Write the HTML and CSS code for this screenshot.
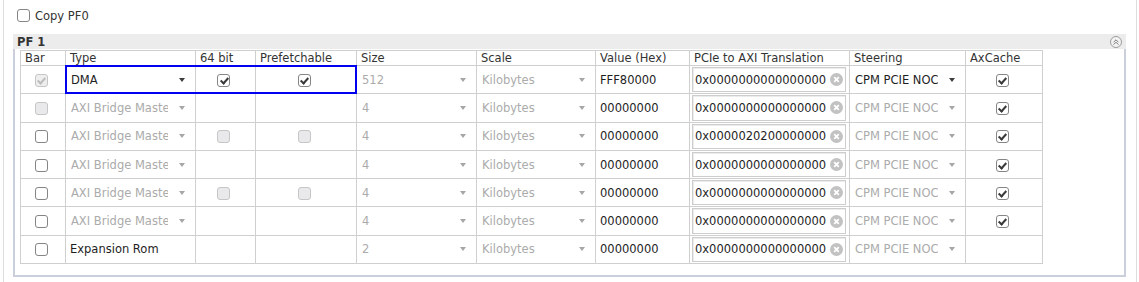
FILE: index.html
```html
<!DOCTYPE html>
<html lang="en">
<head>
  <meta charset="UTF-8" />
  <title>PF 1 BAR settings</title>
  <link rel="stylesheet" href="styles.css">
</head>
<body>
  <div class="frame">
    <label class="copy"><span class="cb"></span>Copy PF0</label>

    <section class="pf">
      <div class="pf-head">
        <span>PF 1</span>
        <svg class="collapse" viewBox="0 0 12 12" width="12" height="12">
          <circle cx="6" cy="6" r="5.5" fill="#f3f3f3" stroke="#9c9c9c" />
          <path d="M3.6 6.2 6 3.8 8.4 6.2M3.6 8.6 6 6.2 8.4 8.6" fill="none" stroke="#7a7a7a" stroke-width="1" />
        </svg>
      </div>

      <div class="pf-body">
        <div class="bars">
          <div class="row head">
            <div class="th">Bar</div>
            <div class="th">Type</div>
            <div class="th">64 bit</div>
            <div class="th">Prefetchable</div>
            <div class="th">Size</div>
            <div class="th">Scale</div>
            <div class="th">Value (Hex)</div>
            <div class="th">PCIe to AXI Translation</div>
            <div class="th">Steering</div>
            <div class="th">AxCache</div>
          </div>

          <!-- BAR 0 -->
          <div class="row">
            <div class="td center"><span class="cb on dis"></span></div>
            <div class="td combo"><span class="val">DMA</span><i class="arrow"></i></div>
            <div class="td center"><span class="cb on"></span></div>
            <div class="td center"><span class="cb on"></span></div>
            <div class="td combo dis"><span class="val">512</span><i class="arrow"></i></div>
            <div class="td combo dis"><span class="val">Kilobytes</span><i class="arrow"></i></div>
            <div class="td">FFF80000</div>
            <div class="td field"><div class="input"><span>0x0000000000000000</span><svg class="clear" viewBox="0 0 13 13" width="13" height="13"><circle cx="6.5" cy="6.5" r="6.5" fill="#c2c2c2" /><path d="M4.2 4.2 8.8 8.8M8.8 4.2 4.2 8.8" stroke="#fff" stroke-width="1.8" /></svg></div></div>
            <div class="td combo"><span class="val">CPM PCIE NOC</span><i class="arrow"></i></div>
            <div class="td center"><span class="cb on"></span></div>
          </div>

          <!-- BAR 1 -->
          <div class="row">
            <div class="td center"><span class="cb dis"></span></div>
            <div class="td combo dis"><span class="val">AXI Bridge Master</span><i class="arrow"></i></div>
            <div class="td"></div>
            <div class="td"></div>
            <div class="td combo dis"><span class="val">4</span><i class="arrow"></i></div>
            <div class="td combo dis"><span class="val">Kilobytes</span><i class="arrow"></i></div>
            <div class="td">00000000</div>
            <div class="td field"><div class="input"><span>0x0000000000000000</span><svg class="clear" viewBox="0 0 13 13" width="13" height="13"><circle cx="6.5" cy="6.5" r="6.5" fill="#c2c2c2" /><path d="M4.2 4.2 8.8 8.8M8.8 4.2 4.2 8.8" stroke="#fff" stroke-width="1.8" /></svg></div></div>
            <div class="td combo dis"><span class="val">CPM PCIE NOC</span><i class="arrow"></i></div>
            <div class="td center"><span class="cb on"></span></div>
          </div>

          <!-- BAR 2 -->
          <div class="row">
            <div class="td center"><span class="cb"></span></div>
            <div class="td combo dis"><span class="val">AXI Bridge Master</span><i class="arrow"></i></div>
            <div class="td center"><span class="cb dis"></span></div>
            <div class="td center"><span class="cb dis"></span></div>
            <div class="td combo dis"><span class="val">4</span><i class="arrow"></i></div>
            <div class="td combo dis"><span class="val">Kilobytes</span><i class="arrow"></i></div>
            <div class="td">00000000</div>
            <div class="td field"><div class="input"><span>0x0000020200000000</span><svg class="clear" viewBox="0 0 13 13" width="13" height="13"><circle cx="6.5" cy="6.5" r="6.5" fill="#c2c2c2" /><path d="M4.2 4.2 8.8 8.8M8.8 4.2 4.2 8.8" stroke="#fff" stroke-width="1.8" /></svg></div></div>
            <div class="td combo dis"><span class="val">CPM PCIE NOC</span><i class="arrow"></i></div>
            <div class="td center"><span class="cb on"></span></div>
          </div>

          <!-- BAR 3 -->
          <div class="row">
            <div class="td center"><span class="cb"></span></div>
            <div class="td combo dis"><span class="val">AXI Bridge Master</span><i class="arrow"></i></div>
            <div class="td"></div>
            <div class="td"></div>
            <div class="td combo dis"><span class="val">4</span><i class="arrow"></i></div>
            <div class="td combo dis"><span class="val">Kilobytes</span><i class="arrow"></i></div>
            <div class="td">00000000</div>
            <div class="td field"><div class="input"><span>0x0000000000000000</span><svg class="clear" viewBox="0 0 13 13" width="13" height="13"><circle cx="6.5" cy="6.5" r="6.5" fill="#c2c2c2" /><path d="M4.2 4.2 8.8 8.8M8.8 4.2 4.2 8.8" stroke="#fff" stroke-width="1.8" /></svg></div></div>
            <div class="td combo dis"><span class="val">CPM PCIE NOC</span><i class="arrow"></i></div>
            <div class="td center"><span class="cb on"></span></div>
          </div>

          <!-- BAR 4 -->
          <div class="row">
            <div class="td center"><span class="cb"></span></div>
            <div class="td combo dis"><span class="val">AXI Bridge Master</span><i class="arrow"></i></div>
            <div class="td center"><span class="cb dis"></span></div>
            <div class="td center"><span class="cb dis"></span></div>
            <div class="td combo dis"><span class="val">4</span><i class="arrow"></i></div>
            <div class="td combo dis"><span class="val">Kilobytes</span><i class="arrow"></i></div>
            <div class="td">00000000</div>
            <div class="td field"><div class="input"><span>0x0000000000000000</span><svg class="clear" viewBox="0 0 13 13" width="13" height="13"><circle cx="6.5" cy="6.5" r="6.5" fill="#c2c2c2" /><path d="M4.2 4.2 8.8 8.8M8.8 4.2 4.2 8.8" stroke="#fff" stroke-width="1.8" /></svg></div></div>
            <div class="td combo dis"><span class="val">CPM PCIE NOC</span><i class="arrow"></i></div>
            <div class="td center"><span class="cb on"></span></div>
          </div>

          <!-- BAR 5 -->
          <div class="row">
            <div class="td center"><span class="cb"></span></div>
            <div class="td combo dis"><span class="val">AXI Bridge Master</span><i class="arrow"></i></div>
            <div class="td"></div>
            <div class="td"></div>
            <div class="td combo dis"><span class="val">4</span><i class="arrow"></i></div>
            <div class="td combo dis"><span class="val">Kilobytes</span><i class="arrow"></i></div>
            <div class="td">00000000</div>
            <div class="td field"><div class="input"><span>0x0000000000000000</span><svg class="clear" viewBox="0 0 13 13" width="13" height="13"><circle cx="6.5" cy="6.5" r="6.5" fill="#c2c2c2" /><path d="M4.2 4.2 8.8 8.8M8.8 4.2 4.2 8.8" stroke="#fff" stroke-width="1.8" /></svg></div></div>
            <div class="td combo dis"><span class="val">CPM PCIE NOC</span><i class="arrow"></i></div>
            <div class="td center"><span class="cb on"></span></div>
          </div>

          <!-- Expansion ROM -->
          <div class="row">
            <div class="td center"><span class="cb"></span></div>
            <div class="td">Expansion Rom</div>
            <div class="td"></div>
            <div class="td"></div>
            <div class="td combo dis"><span class="val">2</span><i class="arrow"></i></div>
            <div class="td combo dis"><span class="val">Kilobytes</span><i class="arrow"></i></div>
            <div class="td">00000000</div>
            <div class="td field"><div class="input"><span>0x0000000000000000</span><svg class="clear" viewBox="0 0 13 13" width="13" height="13"><circle cx="6.5" cy="6.5" r="6.5" fill="#c2c2c2" /><path d="M4.2 4.2 8.8 8.8M8.8 4.2 4.2 8.8" stroke="#fff" stroke-width="1.8" /></svg></div></div>
            <div class="td combo dis"><span class="val">CPM PCIE NOC</span><i class="arrow"></i></div>
            <div class="td"></div>
          </div>

          <div class="selection"></div>
        </div>
      </div>
    </section>
  </div>
</body>
</html>
```

FILE: styles.css
```css
/* Reset */
* {
  box-sizing: border-box;
  margin: 0;
  padding: 0;
}
body {
  font-family: "DejaVu Sans", sans-serif;
  font-size: 11.5px;
  color: #1e1e1e;
  background: #fff;
}

/* Outer frame */
.frame {
  height: 282px;
  margin: 0 2px 0 3px;
  padding: 9px 10px 0 9px;
  border-left: 1px solid #dedede;
  border-right: 1px solid #dedede;
}

/* Checkbox */
.cb {
  position: relative;
  display: inline-block;
  width: 13px;
  height: 13px;
  border: 1px solid #858585;
  border-radius: 3px;
  background: #fff;
  flex-shrink: 0;
}
.cb.dis {
  border-color: #c6c6c6;
  background: #e9e9ec;
}
.cb.on::after {
  content: '';
  position: absolute;
  left: 3.5px;
  top: 1px;
  width: 3px;
  height: 6px;
  border: solid #3a3a3a;
  border-width: 0 2px 2px 0;
  transform: rotate(42deg);
}
.cb.on.dis {
  background: #eeeeee;
}
.cb.on.dis::after {
  border-color: #bdbdbd;
}

/* Copy PF0 */
.copy {
  display: flex;
  align-items: center;
  gap: 5px;
  height: 13px;
  padding-left: 4px;
  color: #333;
}

/* PF section */
.pf {
  margin-top: 12px;
}
.pf-head {
  display: flex;
  justify-content: space-between;
  align-items: center;
  height: 15px;
  padding: 0 4px;
  background: #ececec;
  font-weight: bold;
  color: #333;
}
.collapse {
  display: block;
  margin-top: 1px;
}
.pf-body {
  padding: 1px 0 11px 5px;
  border: 2px solid #cbcedb;
  border-top: none;
}

/* BAR grid */
.bars {
  position: relative;
  width: 1023px;
  border-left: 1px solid #cfcfcf;
  border-top: 1px solid #cfcfcf;
}
.row {
  display: grid;
  grid-template-columns: 45px 130px 60px 101px 120px 119px 94px 160px 116px 77px;
  height: 28.3px;
}
.row.head {
  height: 15px;
}
.th, .td {
  display: flex;
  align-items: center;
  min-width: 0;
  border-right: 1px solid #cfcfcf;
  border-bottom: 1px solid #cfcfcf;
  white-space: nowrap;
}
.th {
  padding-left: 4px;
  color: #333;
}
.td {
  padding-left: 4px;
}
.td.center {
  justify-content: center;
  padding: 1px 4px 0 0;
}

/* Combo boxes */
.combo {
  padding: 0 10px 0 5px;
}
.combo .val {
  flex: 1;
  min-width: 0;
  overflow: hidden;
  margin-right: 11px;
}
.arrow {
  width: 0;
  height: 0;
  border-left: 3.5px solid transparent;
  border-right: 3.5px solid transparent;
  border-top: 4px solid #3c3c3c;
}
.combo.dis {
  color: #ababab;
}
.combo.dis .arrow {
  border-top-color: #a6a6a6;
}

/* Translation field */
.field {
  padding: 1px 3px 1px 2px;
}
.input {
  display: flex;
  align-items: center;
  justify-content: space-between;
  width: 100%;
  height: 100%;
  padding: 0 2px;
  border: 1px solid #cdcdcd;
  box-shadow: inset 1px 1px 0 #ececec;
  background: #fff;
  overflow: hidden;
}
.clear {
  display: block;
  flex-shrink: 0;
}

/* Selected cells highlight */
.selection {
  position: absolute;
  left: 44px;
  top: 14px;
  width: 292px;
  height: 29px;
  border: 2px solid #0000ee;
  pointer-events: none;
}
```
